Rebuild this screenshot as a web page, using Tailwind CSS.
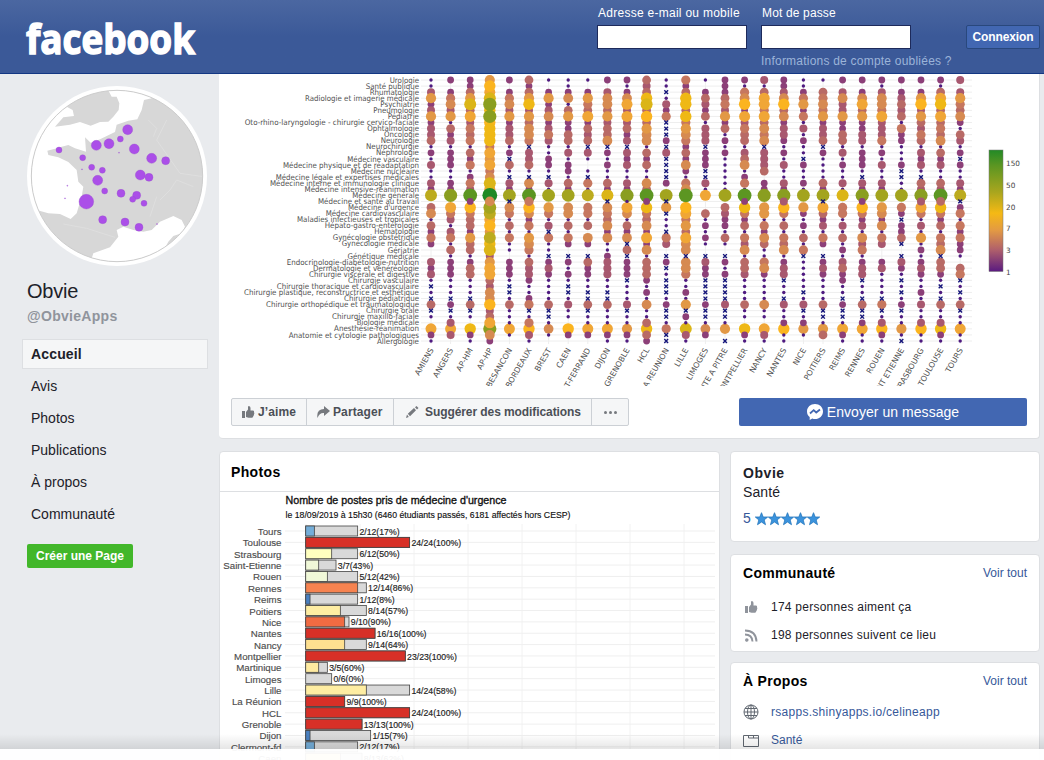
<!DOCTYPE html>
<html lang="fr">
<head>
<meta charset="utf-8">
<title>Obvie</title>
<script src="https://cdn.jsdelivr.net/npm/@tailwindcss/browser@4"></script>
</head>
<body class="relative h-[760px] w-[1044px] overflow-hidden bg-[#e9ebee] font-['Liberation_Sans',sans-serif] text-[#1d2129]">
<header class="flex h-[74px] items-start border-b border-[#133783] bg-linear-to-b from-[#4b67a1] to-[#3b5998] to-50% pl-[26px] text-xs text-white">
  <svg class="mt-[18px] shrink-0 overflow-visible" width="172" height="42" viewBox="0 0 172 42"><text x="0" y="35.500" font-family="Open Sans" font-weight="700" font-size="41" fill="#fff" stroke="#fff" stroke-width="1.500" textLength="169" lengthAdjust="spacingAndGlyphs">facebook</text></svg>
  <div class="ml-[399px] flex pt-[6px]">
    <div class="w-[164px]"><div class="h-[19px] pl-px leading-[14px] tracking-[.27px]">Adresse e-mail ou mobile</div><div class="h-6 w-[150px] border border-[#1d2a5b] bg-white"></div></div>
    <div class="w-[205px]"><div class="h-[19px] pl-px leading-[14px] tracking-[.15px]">Mot de passe</div><div class="h-6 w-[150px] border border-[#1d2a5b] bg-white"></div><div class="mt-[5px] leading-[14px] tracking-[.22px] whitespace-nowrap text-[#9cb4d8]">Informations de compte oubliées ?</div></div>
    <div class="mt-[19px] h-6 w-[74px] rounded-xs border border-[#29487d] bg-[#4267b2] text-center font-bold leading-[23px] tracking-[-.1px]">Connexion</div>
  </div>
</header>
<div class="flex">
  <aside class="w-[219px] shrink-0 pl-[22px] pt-3 text-sm">
    <svg class="ml-[5px]" width="180" height="180" viewBox="81 258 540 540">
      <clipPath id="disc"><circle cx="351" cy="528" r="257"/></clipPath>
      <circle cx="351" cy="528" r="270" fill="#fff"/>
      <g clip-path="url(#disc)"><rect x="81" y="258" width="540" height="540" fill="#d7d7d7"/>
      <path fill="#fff" d="M320 262L335 290 350 290 358 310 356 330 340 350 325 365 300 366 272 377 240 366 210 374 165 380 190 352 222 348 218 330 200 320 165 345 100 380 70 450 80 600 110 630 145 640 180 642 212 657 230 640 245 590 250 560 235 545 230 510 205 486 175 472 145 465 142 452 165 446 185 440 205 435 225 445 258 455 255 412 272 428 300 418 345 396 350 374 385 362 412 358 425 330 432 300 455 295 430 255ZM350 690L370 680 400 690 430 695 455 690 480 665 520 648 545 660 555 680 545 700 520 708 505 725 470 790 270 790 280 760 330 742 355 710Z"/>
      <path d="M445 360L470 385 460 410M500 360L470 420 540 520 610 530M480 600L510 570 530 540 580 560M190 672L260 685 345 712M470 590L450 650" fill="none" stroke="#dedede" stroke-width="3"/></g>
      <circle cx="351" cy="528" r="257" fill="none" stroke="#ccc" stroke-width="3"/>
      <g id="cities" fill="#ab4fe8" stroke="#9650c8" stroke-width="1"></g>
    </svg>
    <h1 class="ml-[5px] mt-[13px] text-xl leading-6 tracking-[-.2px]">Obvie</h1>
    <div class="ml-[5px] mt-1 font-bold leading-[18px] tracking-[.3px] text-[#90949c]">@ObvieApps</div>
    <nav class="mt-[14px] flex w-[186px] flex-col gap-0.5">
      <div class="h-[30px] border border-[#dddfe2] bg-[#f5f6f7] pl-2 font-bold leading-[29px] tracking-[.15px]">Accueil</div>
      <div class="h-[30px] pl-[9px] leading-[31px]">Avis</div>
      <div class="h-[30px] pl-[9px] leading-[31px]">Photos</div>
      <div class="h-[30px] pl-[9px] leading-[31px]">Publications</div>
      <div class="h-[30px] pl-[9px] leading-[31px]">À propos</div>
      <div class="h-[30px] pl-[9px] leading-[31px]">Communauté</div>
    </nav>
    <div class="ml-[5px] mt-[15px] h-6 w-[106px] rounded-xs bg-[#42b72a] text-center text-xs font-bold leading-6 text-white">Créer une Page</div>
  </aside>
  <main class="w-[821px] shrink-0">
    <section class="h-[365px] rounded-b border-b border-r border-[#dddfe2] bg-white">
      <svg id="bubbles" class="block" width="820" height="312" viewBox="219 74 820 312" font-family="DejaVu Sans" fill="#505050">
        <defs><linearGradient id="scale" x1="0" y1="0" x2="0" y2="1"><stop offset="0" stop-color="#228a26"/><stop offset=".13" stop-color="#5c9622"/><stop offset=".35" stop-color="#aaa61e"/><stop offset=".52" stop-color="#f5b914"/><stop offset=".66" stop-color="#e39a43"/><stop offset=".82" stop-color="#b0606b"/><stop offset="1" stop-color="#5a1a80"/></linearGradient></defs>
        <g id="rows" stroke="#eee" stroke-width="1"></g>
        <g id="dots"></g>
        <g id="specialties" font-size="7.8"></g>
        <g id="towns" font-size="7.8" text-anchor="end"></g>
        <rect x="989" y="150" width="14" height="121.500" fill="url(#scale)" stroke="#777" stroke-width=".5"/>
        <g font-size="7.300" fill="#444"><text x="1006" y="166">150</text><text x="1006" y="187.500">50</text><text x="1006" y="209.500">20</text><text x="1006" y="231">7</text><text x="1006" y="252.500">3</text><text x="1006" y="274.500">1</text></g>
      </svg>
      <div class="flex items-start justify-between pl-3 pr-3 pt-3">
        <div class="flex h-7 rounded-xs border border-[#ccd0d5] bg-[#f5f6f7] text-xs font-bold leading-[26px] text-[#4b4f56]">
          <div class="flex w-[75px] items-center border-r border-[#ccd0d5] pl-[10px]"><svg width="13" height="13" viewBox="0 0 13 13" fill="#76797e"><path d="M0 5h3v7H0zM4 6l2-2.500V1q0-1 1-1 1.500.3 1.500 2v2.500H11q1.500.3 1 1.700.8 1 0 2 .2 1.200-.7 1.700 0 1.600-1.400 1.800H6.500L4 11z"/></svg><span class="ml-[3px] tracking-[.1px]">J’aime</span></div>
          <div class="flex w-[87px] items-center border-r border-[#ccd0d5] pl-[10px]"><svg width="13" height="12" viewBox="0 0 13 12" fill="#76797e"><path d="M7 0l6 5-6 5V7Q2.500 6.500.5 12-1 3.500 7 3z"/></svg><span class="ml-[3px] tracking-[.1px]">Partager</span></div>
          <div class="flex w-[198px] items-center border-r border-[#ccd0d5] pl-[12px]"><svg width="13" height="12" viewBox="0 0 13 12" fill="#76797e"><path d="M0 12l1-3.500L2.800 11zM1.800 7.700L8 2l2 2.200-6 6zM9 1.200L10.500 0 12.500 2 11 3.400z"/></svg><span class="ml-[6px] tracking-[-.08px]">Suggérer des modifications</span></div>
          <div class="flex w-9 items-center justify-center gap-[2px]"><i class="size-[3px] rounded-full bg-[#76797e]"></i><i class="size-[3px] rounded-full bg-[#76797e]"></i><i class="size-[3px] rounded-full bg-[#76797e]"></i></div>
        </div>
        <div class="flex h-7 w-[288px] items-center justify-center gap-1 rounded-xs bg-[#4267b2] text-sm tracking-[.05px] text-white"><svg width="16" height="16" viewBox="0 0 16 16"><path fill="#fff" d="M8 0C3.500 0 0 3.200 0 7.400c0 2.300 1 4.200 2.700 5.600V16l2.600-1.500Q6.500 15 8 15c4.500 0 8-3.300 8-7.600S12.500 0 8 0z"/><path fill="none" stroke="#4267b2" stroke-width="1.800" d="M3 9.500L6.700 6.200l2.500 2.300L13 5.500"/></svg>Envoyer un message</div>
      </div>
    </section>
    <div class="mt-3 flex items-start gap-[10px]">
      <section class="h-[320px] w-[501px] rounded border border-[#dddfe2] bg-white">
        <h2 class="h-[40px] border-b border-[#dddfe2] pl-[11px] text-sm font-bold leading-[41px] tracking-[.35px] text-black">Photos</h2>
        <svg id="bars" class="block" width="499" height="278" viewBox="220 492 499 278" font-family="Liberation Sans">
          <g font-size="11" fill="#111"><text x="285.500" y="503.500" textLength="221" lengthAdjust="spacingAndGlyphs" stroke="#111" stroke-width=".35">Nombre de postes pris de médecine d'urgence</text><text x="285.500" y="517.500" font-size="9" textLength="285" lengthAdjust="spacingAndGlyphs" stroke="#111" stroke-width=".15">le 18/09/2019 à 15h30 (6460 étudiants passés, 6181 affectés hors CESP)</text></g>
        </svg>
      </section>
      <div class="flex w-[310px] flex-col">
        <section class="h-[91px] rounded border border-[#dddfe2] bg-white pl-3 pt-[12px] text-sm">
          <h2 class="font-bold leading-[19px] tracking-[.55px]">Obvie</h2><div class="leading-[19px] tracking-[.1px]">Santé</div>
          <div class="mt-[7px] flex items-center leading-[19px] text-[#365899]"><span class="mr-1">5</span><svg width="66" height="14" viewBox="0 0 66 14" fill="#3b93dd" stroke="#2677bd" stroke-width=".8"><path id="star" d="M6.500.7L8.200 5H12.700L9.200 7.900 10.500 12.700 6.500 10 2.500 12.700 3.800 7.900.3 5H4.800Z"/><use href="#star" x="13"/><use href="#star" x="26"/><use href="#star" x="39"/><use href="#star" x="52"/></svg></div>
        </section>
        <section class="mt-3 h-[98px] rounded border border-[#dddfe2] bg-white px-3 pt-2 text-xs">
          <div class="flex justify-between leading-[20px]"><h2 class="text-sm font-bold tracking-[.3px] text-black">Communauté</h2><a class="text-[#365899]">Voir tout</a></div>
          <div class="mt-[10px] flex h-7 items-center tracking-[.25px]"><svg class="mx-[2px] mr-[13px]" width="13" height="13" viewBox="0 0 13 13" fill="#90949c"><path d="M0 5h3v7H0zM4 6l2-2.500V1q0-1 1-1 1.500.3 1.500 2v2.500H11q1.500.3 1 1.700.8 1 0 2 .2 1.200-.7 1.700 0 1.600-1.400 1.800H6.500L4 11z"/></svg>174 personnes aiment ça</div>
          <div class="flex h-7 items-center tracking-[.22px]"><svg class="mx-[2px] mr-[13px]" width="13" height="13" viewBox="0 0 13 13" fill="none" stroke="#90949c" stroke-width="1.900"><circle cx="1.800" cy="11" r=".8"/><path d="M0 5.500Q7 5.500 7.500 12.500M0 1.500Q11 1.500 11.500 12.500"/></svg>198 personnes suivent ce lieu</div>
        </section>
        <section class="mt-[10px] h-[120px] rounded border border-[#dddfe2] bg-white px-3 pt-2 text-xs text-[#365899]">
          <div class="flex justify-between leading-[20px]"><h2 class="text-sm font-bold tracking-[.3px] text-black">À Propos</h2><a>Voir tout</a></div>
          <div class="mt-[7px] flex h-7 items-center tracking-[.28px]"><svg class="mr-3" width="16" height="16" viewBox="0 0 16 16" fill="none" stroke="#606770"><circle cx="8" cy="8" r="7"/><ellipse cx="8" cy="8" rx="3.500" ry="7"/><path d="M8 1v14M1 8h14M2 4.500h12M2 11.500h12"/></svg>rsapps.shinyapps.io/celineapp</div>
          <div class="flex h-7 items-center"><svg class="mr-3" width="16" height="13" viewBox="0 0 16 13" fill="none" stroke="#606770"><path d="M.5 1.500h15v11H.5zM5.500 1.500v2.500h10M10.500 1.500v2.500"/></svg>Santé</div>
        </section>
      </div>
    </div>
  </main>
</div>
<div class="absolute inset-x-0 top-[734px] h-[15px] bg-linear-to-b from-black/0 to-black/10"></div>
<div class="absolute inset-x-0 top-[749px] h-[11px] bg-white/95"></div>
<script>
const NS = 'http://www.w3.org/2000/svg';
function add(parent, tag, attrs, text) {
  const n = document.createElementNS(NS, tag);
  for (const k in attrs) n.setAttribute(k, attrs[k]);
  if (text) n.textContent = text;
  parent.appendChild(n);
  return n;
}
const $ = id => document.getElementById(id);

[[383,389,15],[361,417,9],[327,431,15],[289,436,15],[403,447,15],[177,450,9],[248,473,9],[455,475,15],[497,482,12],[275,502,9],[307,511,9],[421,525,15],[447,532,12],[293,541,15],[314,573,9],[363,580,12],[410,586,12],[398,598,9],[432,610,9],[259,605,22],[308,659,12],[375,666,12],[417,682,12]]
  .forEach(([cx, cy, r]) => add($('cities'), 'circle', {cx, cy, r}));
[[357,458],[246,508],[202,557],[195,595],[471,672]].forEach(([cx, cy]) => add($('cities'), 'circle', {cx, cy, r: 1.5}));

// Specialty labels with the x at which each one starts
const specialties = [['Urologie',389.7],['Santé publique',365.7],['Rhumatologie',369.7],['Radiologie et imagerie médicale',305],['Psychiatrie',380.3],['Pneumologie',373.3],['Pédiatrie',387.7],['Oto-rhino-laryngologie - chirurgie cervico-faciale',244.7],['Ophtalmologie',367.3],['Oncologie',384],['Neurologie',380.7],['Neurochirurgie',366],['Néphrologie',376],['Médecine vasculaire',347.3],['Médecine physique et de réadaptation',283],['Médecine nucléaire',350.7],['Médecine légale et expertises médicales',275.7],['Médecine interne et immunologie clinique',270],['Médecine intensive-réanimation',304.5],['Médecine générale',352.3],['Médecine et santé au travail',318],["Médecine d'urgence",348],['Médecine cardiovasculaire',325.7],['Maladies infectieuses et tropicales',297],['Hépato-gastro-entérologie',324.7],['Hématologie',374.3],['Gynécologie obstétrique',332.7],['Gynécologie médicale',341.7],['Gériatrie',387.7],['Génétique médicale',347.5],['Endocrinologie-diabétologie-nutrition',286.7],['Dermatologie et vénéréologie',313],['Chirurgie viscérale et digestive',309],['Chirurgie vasculaire',348],['Chirurgie thoracique et cardiovasculaire',276.7],['Chirurgie plastique, reconstructrice et esthétique',244],['Chirurgie pédiatrique',344],['Chirurgie orthopédique et traumatologique',266],['Chirurgie orale',366],['Chirurgie maxillo-faciale',332],['Biologie médicale',356.7],['Anesthésie-réanimation',334],['Anatomie et cytologie pathologiques',288.7],['Allergologie',377]];

// One character per specialty: x = none open, 1-9 then a-g = size class, - = blank
const towns = {
  'AMIENS':          '1137237233 412131132c -4614252-- 3231x1x4x1 -821',
  'ANGERS':          '2-25637142 312221122e -853135141 222111x2x1 383-',
  'AP-HM':           '2247b48354 514251253f 2954427441 244111x4x1 -a21',
  'AP-HP':           '798beae9aa a587856b8g 6dc897cab3 7884366934 8e62',
  'BESANCON':        '2-25637233 412x41x32d x65141511- 2221xx1411 181-',
  'BORDEAUX':        '4247a37466 5x3341x62f 5962517651 43321125x1 5931',
  'BREST':           '1-27236235 311221x31d -7513x511x 23211114xx 161-',
  'CAEN':            '1126147224 413122142d -6614152-x 2121xx1311 -92-',
  'CLERMONT-FERRAND':'1-27548243 4x31-1x51c -5514-62-x 42211xx4x1 182-',
  'DIJON':           '2-36647344 6x2121142b x654626112 33311xx411 1821',
  'GRENOBLE':        '2126838342 3x3231132e 1861426x4x 222x1113x1 1721',
  'HCL':             '434ab49476 614241164f 2a54628261 4442121611 4a42',
  'LA REUNION':      '11x1325xxx 2x3xxxx2-d x7x11x53-x 2x1xxx12xx 15xx',
  'LILLE':           '524aa4a576 524262156f -98574866x 66511217x2 1b31',
  'LIMOGES':         '1-24324133 3x222xx318 --412121-x 322xxxx2xx 162-',
  'POINTE A PITRE':  '2224537241 212111111d -4322141-x 212xxxx3xx 17-x',
  'MONTPELLIER':     '2156928354 413461251f 2a52415361 4431111411 -a21',
  'NANCY':           '3148858465 6x3334-22e -771526411 5621111611 -831',
  'NANTES':          '2236946233 212131132e 3951415461 233x11x311 2911',
  'NICE':            '1125725131 211x21121d -72121415x 11111x13x1 271-',
  'POITIERS':        '1-45657233 4x2111142d x8423152-x 23211114xx 174-',
  'REIMS':           '2-36337224 413121131b -551314121 342211x2xx 1821',
  'RENNES':          '2-26847223 312221x32e 2952316351 233x11x4xx 2811',
  'ROUEN':           '2136658333 512131132d -7626153-- 231111x5x1 3921',
  'SAINT ETIENNE':   '2-23434152 21112xx11d -52x224x-x 321x1x12x1 171x',
  'STRASBOURG':      '2-27937435 413231x43e 3851317121 2321121311 3911',
  'TOULOUSE':        '2148a48454 614231143f 4a5241546x 4421x1x411 3a21',
  'TOURS':           '3-37546214 312x21132c x251525221 -45x1x14x1 1811'
};
const sizes = {1:[1.7,'#4e1a80'],2:[3.4,'#8c3f78'],3:[4,'#a8586f'],4:[4.4,'#b86a66'],5:[4.6,'#c6775f'],6:[4.9,'#d68a51'],7:[5.1,'#e29845'],8:[5.5,'#f0a636'],9:[5.7,'#fbb41f'],a:[5.7,'#efb815'],b:[6,'#dbb517'],c:[6,'#bcab1e'],d:[6.4,'#a3a41e'],e:[6.6,'#8a9e20'],f:[6.9,'#5c9622'],g:[7.4,'#1f8a26']};
const rowY = i => 80 + i * 6.07, colX = j => 431 + j * 19.6;

specialties.forEach(([name, x], i) => {
  add($('rows'), 'line', {x1: 421, x2: 972, y1: rowY(i), y2: rowY(i)});
  add($('specialties'), 'text', {x, y: rowY(i) + 2.6, textLength: 419 - x, lengthAdjust: 'spacingAndGlyphs'}, name);
});
Object.entries(towns).forEach(([name, code], j) => {
  const x = colX(j);
  add($('rows'), 'line', {x1: x, x2: x, y1: 77, y2: 344});
  const chars = code.replace(/ /g, '').split('');
  const cells = chars.map((c, i) => ({c, i, y: rowY(i)})).filter(d => d.c !== '-');
  const rank = d => (d.i === 20 || d.i === 40 || d.i === 42 ? 50 : 0) + (sizes[d.c] ? sizes[d.c][0] : 20);
  cells.sort((a, b) => rank(a) - rank(b));
  for (const {c, y} of cells) {
    if (c === 'x') add($('dots'), 'path', {d: `M${x - 1.9} ${y - 1.9}l3.8 3.8m0 -3.8l-3.8 3.8`, stroke: '#15157a', 'stroke-width': 1.4});
    else add($('dots'), 'circle', {cx: x, cy: y, r: sizes[c][0], fill: sizes[c][1]});
  }
  add($('towns'), 'text', {transform: `translate(${x + 3} 350) rotate(-60)`}, name);
});

// Town, places taken, places open, fill colour
const posts = [['Tours',2,12,'#74add8'],['Toulouse',24,24,'#d73027'],['Strasbourg',6,12,'#ffffbf'],['Saint-Etienne',3,7,'#f0f8d8'],['Rouen',5,12,'#f0f8d8'],['Rennes',12,14,'#f68350'],['Reims',1,12,'#4a80c0'],['Poitiers',8,14,'#feeda2'],['Nice',9,10,'#f06b42'],['Nantes',16,16,'#d73027'],['Nancy',9,14,'#fee090'],['Montpellier',23,23,'#d73027'],['Martinique',3,5,'#feeaa0'],['Limoges',0,6,'#ddd'],['Lille',14,24,'#feeda2'],['La Réunion',9,9,'#d73027'],['HCL',24,24,'#d73027'],['Grenoble',13,13,'#d73027'],['Dijon',1,15,'#4a80c0'],['Clermont-fd',2,12,'#74add8'],['Caen',8,13,'#fee8a0']];
for (let k = 0; k < 8; k++) add($('bars'), 'line', {x1: 306 + k * 54, x2: 306 + k * 54, y1: 524, y2: 770, stroke: '#f2f2f2'});
posts.forEach(([town, n, total, fill], i) => {
  const y = 531 + i * 11.36, s = 4.33, g = $('bars');
  add(g, 'line', {x1: 285, x2: 715, y1: y, y2: y, stroke: '#efefef'});
  add(g, 'rect', {x: 305.7, y: y - 5, width: total * s, height: 10, fill: '#d9d9d9', stroke: '#444', 'stroke-width': .8});
  if (n) add(g, 'rect', {x: 305.7, y: y - 5, width: n * s, height: 10, fill, stroke: '#444', 'stroke-width': .8});
  add(g, 'text', {x: 281.5, y: y + 4, 'text-anchor': 'end', 'font-size': 9.7, fill: '#4d4d4d', stroke: '#4d4d4d', 'stroke-width': .15}, town);
  add(g, 'text', {x: 307.5 + total * s, y: y + 3.6, 'font-size': 8.7, fill: '#222', stroke: '#222', 'stroke-width': .15}, `${n}/${total}(${Math.round(n / total * 100)}%)`);
});
</script>
</body>
</html>
